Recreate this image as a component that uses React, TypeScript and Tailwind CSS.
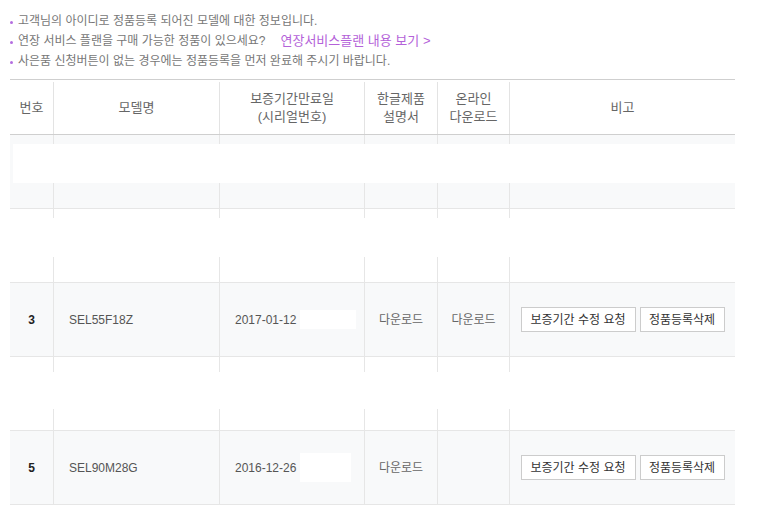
type Row = {
  no?: string;
  model?: string;
  date?: string;
  maskW?: number;
  maskH?: number;
  manual?: boolean;
  online?: boolean;
  actions?: boolean;
  gray: boolean;
  hide?: 'full' | 'band' | 'lower';
};

const rows: Row[] = [
  { gray: true, hide: 'full' },
  { gray: false, hide: 'band' },
  { no: '3', model: 'SEL55F18Z', date: '2017-01-12', maskW: 56, maskH: 19, manual: true, online: true, actions: true, gray: true },
  { gray: false, hide: 'lower' },
  { no: '5', model: 'SEL90M28G', date: '2016-12-26', maskW: 51, maskH: 29, manual: true, online: false, actions: true, gray: true },
];

const cols = 'grid grid-cols-[43px_166px_145px_73px_72px_226px]';

function Note({ children }: { children: React.ReactNode }) {
  return (
    <li className="flex items-center h-[20px]">
      <span className="w-[3px] h-[3px] rounded-full bg-[#b46ee0] ml-[10px] mr-[5px] mt-[2px]" />
      {children}
    </li>
  );
}

export default function App() {
  return (
    <div className="w-[760px] h-[514px] bg-white font-['Liberation_Sans','Noto_Sans_CJK_KR',sans-serif] overflow-hidden">
      <ul className="pt-[11px] text-[12px] text-[#777]">
        <Note>고객님의 아이디로 정품등록 되어진 모델에 대한 정보입니다.</Note>
        <Note>
          연장 서비스 플랜을 구매 가능한 정품이 있으세요?
          <a className="ml-[15px] text-[13px] text-[#b462d9]">연장서비스플랜 내용 보기 &gt;</a>
        </Note>
        <Note>사은품 신청버튼이 없는 경우에는 정품등록을 먼저 완료해 주시기 바랍니다.</Note>
      </ul>

      <div className="ml-[10px] mt-[8px] w-[725px]">
        {/* header */}
        <div className={`${cols} h-[56px] pt-[2px] border-t border-b border-[#cfcfcf] text-[13px] text-[#666] leading-[18px] text-center`}>
          <div className="flex items-center justify-center">번호</div>
          <div className="flex items-center justify-center border-l border-[#e3e3e3]">모델명</div>
          <div className="flex items-center justify-center border-l border-[#e3e3e3]">
            보증기간만료일
            <br />
            (시리얼번호)
          </div>
          <div className="flex items-center justify-center border-l border-[#e3e3e3]">
            한글제품
            <br />
            설명서
          </div>
          <div className="flex items-center justify-center border-l border-[#e3e3e3]">
            온라인
            <br />
            다운로드
          </div>
          <div className="flex items-center justify-center border-l border-[#e3e3e3]">비고</div>
        </div>

        {rows.map((r, i) => (
          <div
            key={i}
            className={`relative ${cols} h-[74px] border-b border-[#e6e6e6] text-[12px] text-[#555] ${r.gray ? 'bg-[#f8f9fa]' : 'bg-white'}`}
          >
            <div className="flex items-center justify-center font-bold text-[#222]">{r.no}</div>
            <div className="flex items-center pl-[15px] border-l border-[#e6e6e6]">{r.model}</div>
            <div className="flex items-center pl-[15px] border-l border-[#e6e6e6]">
              {r.date}
              {r.date && <span className="ml-[4px] bg-white" style={{ width: r.maskW, height: r.maskH }} />}
            </div>
            <div className="flex items-center justify-center border-l border-[#e6e6e6] text-[#666]">{r.manual && '다운로드'}</div>
            <div className="flex items-center justify-center border-l border-[#e6e6e6] text-[#666]">{r.online && '다운로드'}</div>
            <div className="flex items-center justify-center gap-[4px] border-l border-[#e6e6e6]">
              {r.actions && (
                <>
                  <button className="w-[115px] h-[25px] border border-[#ccc] bg-white text-[#333] text-[12px]">보증기간 수정 요청</button>
                  <button className="w-[85px] h-[25px] border border-[#ccc] bg-white text-[#333] text-[12px]">정품등록삭제</button>
                </>
              )}
            </div>
            {r.hide === 'full' && <div className="absolute left-[3px] right-[-25px] top-[9px] h-[39px] bg-white" />}
            {r.hide === 'band' && <div className="absolute left-0 right-0 top-[9px] h-[39px] bg-white" />}
            {r.hide === 'lower' && <div className="absolute left-0 right-0 top-[15px] h-[37px] bg-white" />}
          </div>
        ))}
      </div>
    </div>
  );
}
